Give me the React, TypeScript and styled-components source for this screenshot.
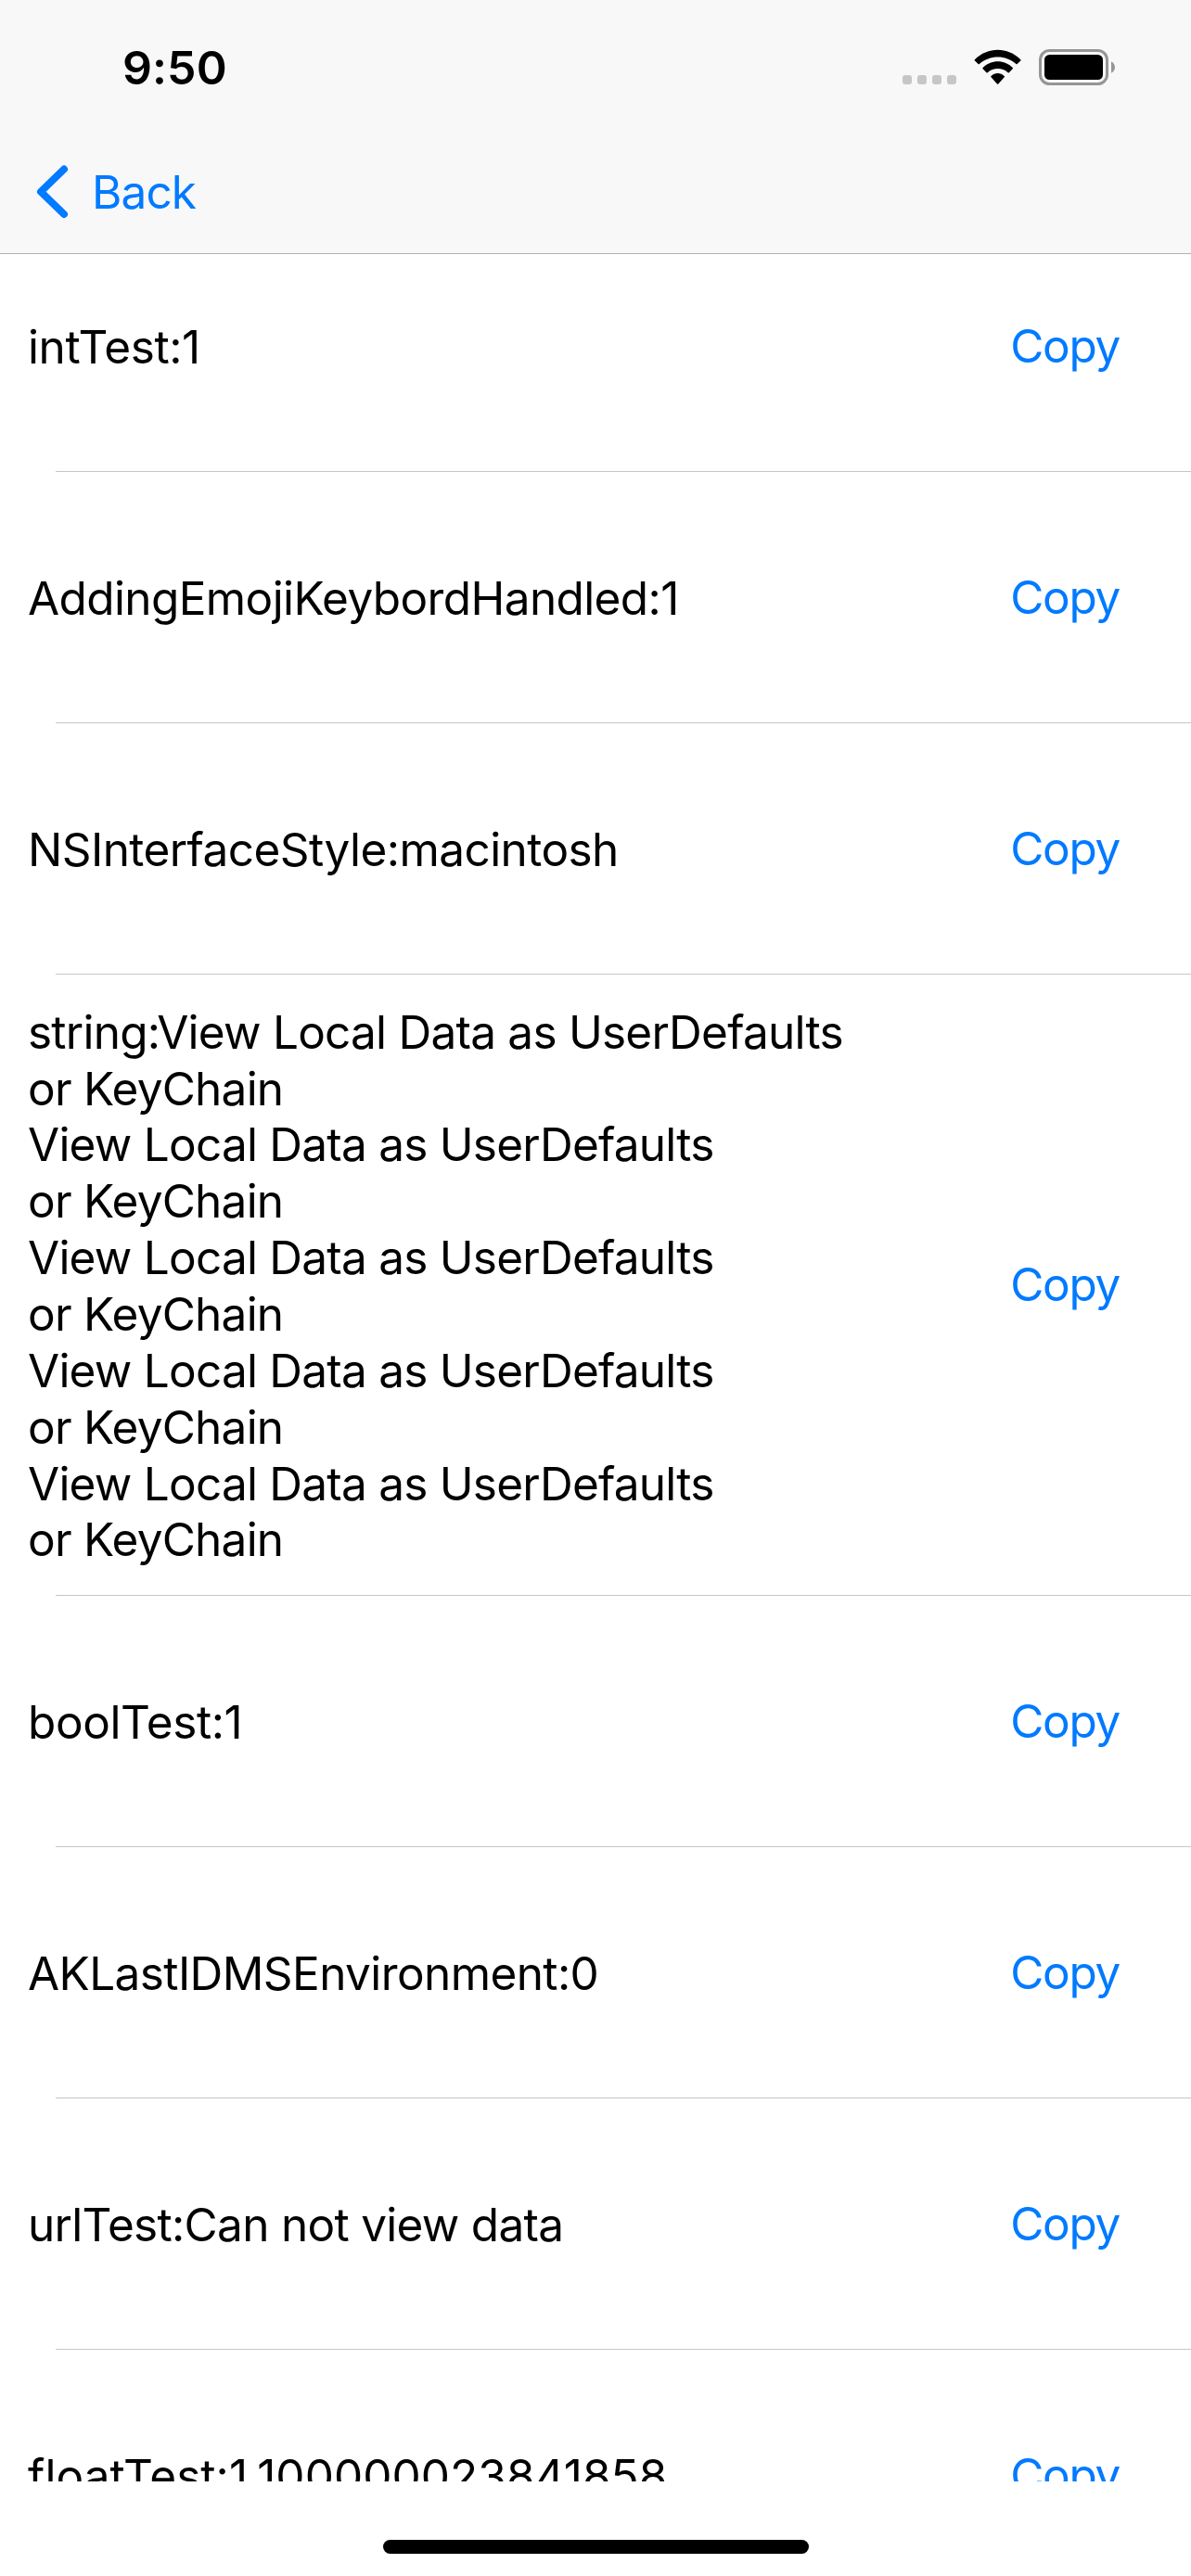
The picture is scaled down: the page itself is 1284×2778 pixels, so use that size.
import React from "react";
import styled, { createGlobalStyle } from "styled-components";

const BLUE = "#007aff";

const GlobalStyle = createGlobalStyle`
  html, body { margin: 0; padding: 0; background: #fff; }
  * { box-sizing: border-box; }
`;

const Screen = styled.div`
  width: 1284px;
  height: 2778px;
  display: flex;
  flex-direction: column;
  overflow: hidden;
  background: #fff;
  color: #000;
  font-family: Inter, "Liberation Sans", sans-serif;
  font-size: 49.5px;
`;

const Header = styled.header`
  flex: none;
  height: 274px;
  background: #f8f8f8;
  border-bottom: 1px solid #b2b2b2;
`;

const StatusBar = styled.div`
  height: 141px;
  padding: 0 81px 0 132px;
  display: flex;
  align-items: center;
  justify-content: space-between;
`;

const Clock = styled.time`
  font-size: 50px;
  font-weight: 600;
  line-height: 60px;
  letter-spacing: 0.1px;
  margin-top: 5px;
`;

const StatusIcons = styled.svg`
  display: block;
  width: 230px;
  height: 40px;
  margin-top: 5px;
`;

const NavBar = styled.nav`
  height: 132px;
  padding-left: 39px;
  display: flex;
  align-items: center;
`;

const BackButton = styled.button`
  display: flex;
  align-items: center;
  gap: 25px;
  padding: 0;
  border: 0;
  background: none;
  color: ${BLUE};
  font: inherit;
  letter-spacing: -0.9px;
`;

const Chevron = styled.svg`
  display: block;
  width: 35px;
  height: 58px;
`;

const List = styled.ul`
  flex: none;
  height: 2402px;
  margin: 0;
  padding: 0;
  overflow: hidden;
  list-style: none;
`;

const Row = styled.li<{ $height: number; $clipped?: number }>`
  height: ${(p) => p.$height}px;
  margin-top: ${(p) => (p.$clipped ? -p.$clipped : 0)}px;
  padding: 0 77px 0 30px;
  display: flex;
  align-items: center;
  justify-content: space-between;
  background: linear-gradient(#c6c6c8, #c6c6c8) 60px 100% / 100% 1px no-repeat;
`;

const Value = styled.span<{ $tracking: number }>`
  white-space: pre;
  margin-top: 2px;
  line-height: 60.86px;
  letter-spacing: ${(p) => p.$tracking}px;
`;

const CopyButton = styled.button`
  padding: 0;
  margin-bottom: 2px;
  border: 0;
  background: none;
  color: ${BLUE};
  font: inherit;
  line-height: 60px;
  letter-spacing: -1.3px;
`;

const Footer = styled.footer`
  flex: 1;
  display: flex;
  justify-content: center;
  padding-top: 63px;
`;

const HomeIndicator = styled.div`
  width: 459px;
  height: 15px;
  border-radius: 8px;
  background: #000;
`;

const SENTENCE = "View Local Data as UserDefaults\nor KeyChain";

const entries = [
  { text: "intTest:1", height: 271, tracking: -0.4, clipped: 36 },
  { text: "AddingEmojiKeybordHandled:1", height: 271, tracking: -0.61 },
  { text: "NSInterfaceStyle:macintosh", height: 271, tracking: -0.57 },
  { text: "string:" + Array(5).fill(SENTENCE).join("\n"), height: 670, tracking: -0.76 },
  { text: "boolTest:1", height: 271, tracking: -0.4 },
  { text: "AKLastIDMSEnvironment:0", height: 271, tracking: -0.6 },
  { text: "urlTest:Can not view data", height: 271, tracking: -0.7 },
  { text: "floatTest:1.100000023841858", height: 271, tracking: 0.06 },
];

export default function App() {
  return (
    <Screen>
      <GlobalStyle />
      <Header>
        <StatusBar>
          <Clock>9:50</Clock>
          <StatusIcons viewBox="0 0 230 40">
            <g fill="#c6c6c6">
              <rect x="0" y="28" width="10" height="10" rx="3" />
              <rect x="16" y="28" width="10" height="10" rx="3" />
              <rect x="32" y="28" width="10" height="10" rx="3" />
              <rect x="48" y="28" width="10" height="10" rx="3" />
            </g>
            <path d="M77.9 12.4a.8.8 0 0 1 0-1.2C91.700-2.800 113.500-2.800 127.300 11.200a.8.8 0 0 1 0 1.200l-3.700 3.700a.9.900 0 0 1-1.200 0C111.500 6 94 6 82.800 16.100a.9.900 0 0 1-1.200 0z" />
            <path d="M86.600 21.200a.8.800 0 0 1 0-1.200C95.200 11 110.100 11 118.700 20a.8.800 0 0 1 0 1.200l-3.900 4a.9.900 0 0 1-1.200 0C107.500 19.700 98 19.700 91.700 25.200a.9.900 0 0 1-1.200 0z" />
            <path d="M95.500 30.200a.8.800 0 0 1 0-1.200c4-4 10.200-4 14.200 0a.8.800 0 0 1 0 1.200l-6.400 7.300a.9.900 0 0 1-1.300 0z" />
            <rect x="148.500" y="1.500" width="72" height="36" rx="10" fill="none" stroke="#969696" strokeWidth="3" />
            <rect x="153" y="6" width="63" height="27" rx="5.500" />
            <path d="M225 13.300c5.300 2.400 5.300 10.200 0 12.500z" fill="#969696" />
          </StatusIcons>
        </StatusBar>
        <NavBar>
          <BackButton>
            <Chevron viewBox="0 0 35 58">
              <path d="M30 4.500L5 28.750l25 24.250" fill="none" stroke={BLUE} strokeWidth="8" strokeLinecap="round" strokeLinejoin="round" />
            </Chevron>
            Back
          </BackButton>
        </NavBar>
      </Header>
      <List>
        {entries.map((e) => (
          <Row key={e.text} $height={e.height} $clipped={e.clipped}>
            <Value $tracking={e.tracking}>{e.text}</Value>
            <CopyButton>Copy</CopyButton>
          </Row>
        ))}
      </List>
      <Footer>
        <HomeIndicator />
      </Footer>
    </Screen>
  );
}
